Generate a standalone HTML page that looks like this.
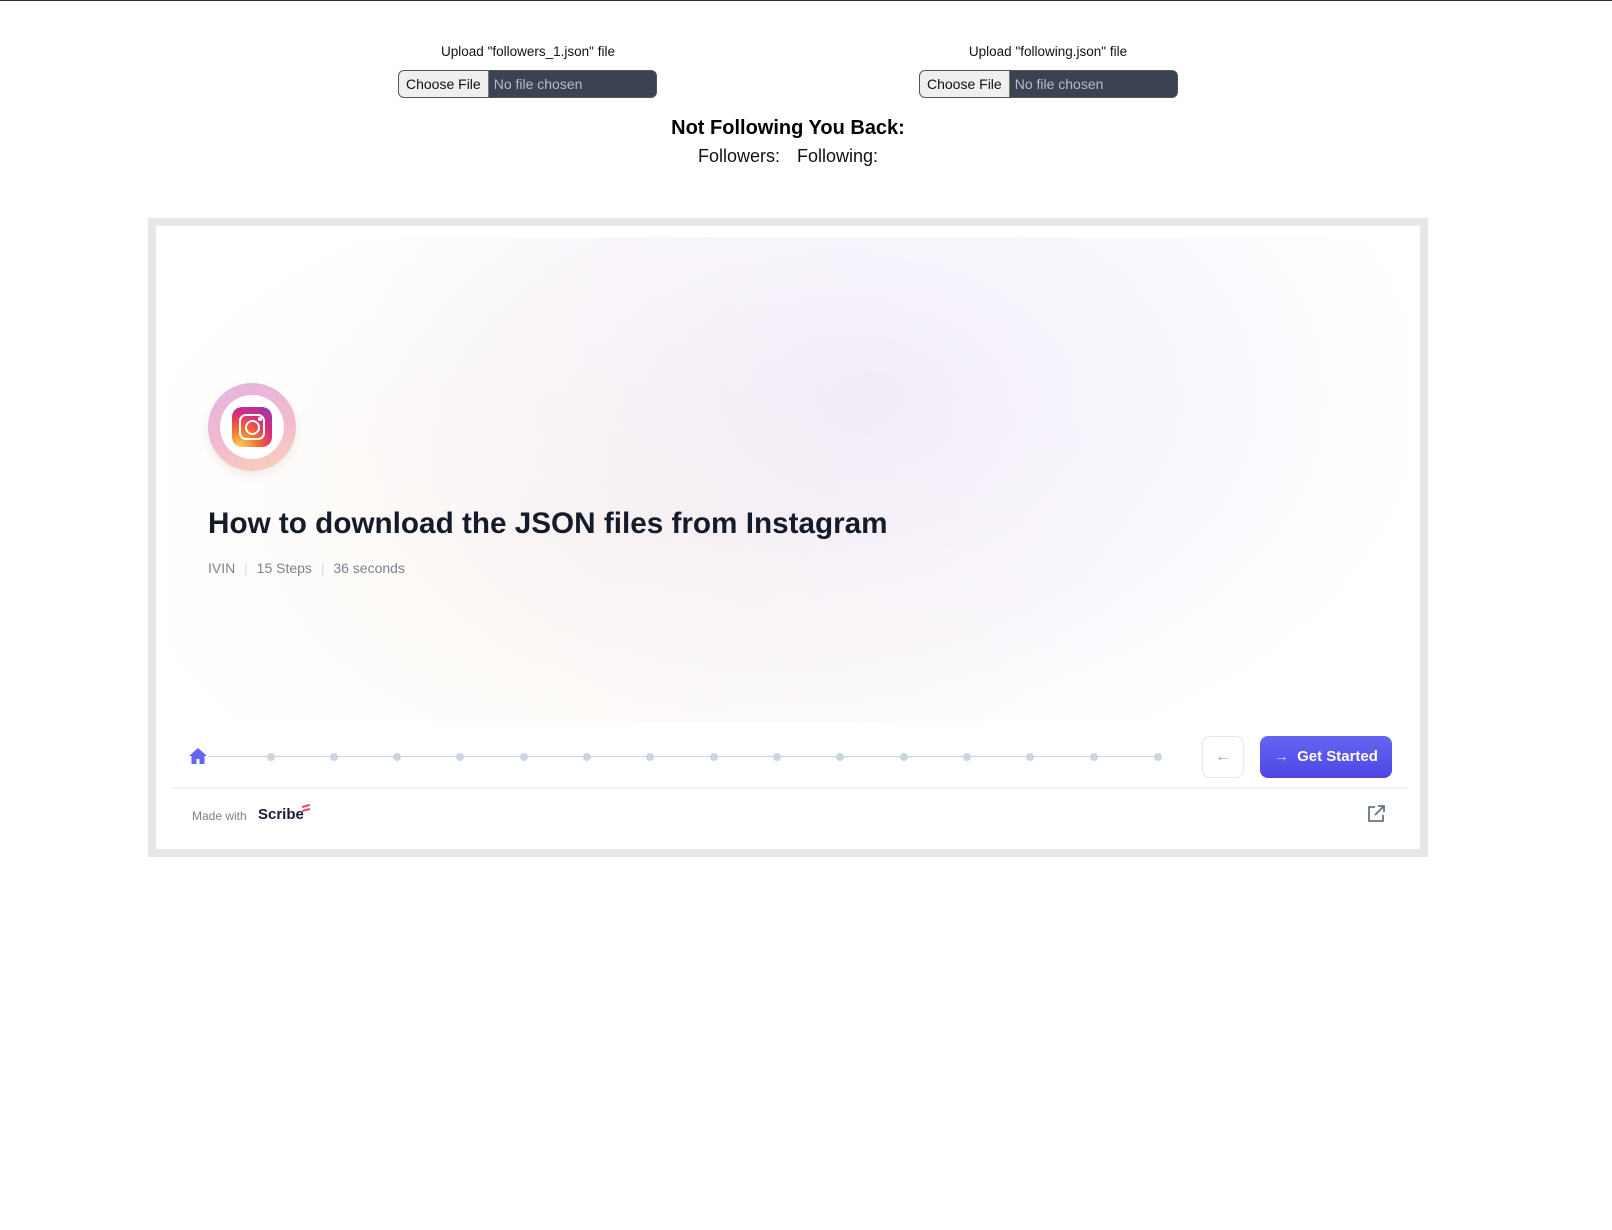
<!DOCTYPE html>
<html><head><meta charset="utf-8"><style>
body{margin:0;width:1612px;height:1230px;background:#fff;font-family:"Liberation Sans",sans-serif;position:relative;overflow:hidden;border-top:1px solid #333;box-sizing:border-box}
.a{position:absolute}
.lbl{font-size:13.5px;color:#111;text-align:center;width:300px}
.inp{height:26px;border:1px solid #555;border-radius:6px;background:#3b4252;overflow:hidden;font-size:14px;display:flex}
.inp .b{background:#efefef;color:#111;padding:0 7px;line-height:26px;border-right:1px solid #777}
.inp .t{color:#b8bcc6;padding-left:5px;line-height:26px}
.frame{left:148px;top:217px;width:1264px;height:623px;border:8px solid #e5e7eb;background:#fff}
.dot{width:8px;height:8px;border-radius:50%;background:#cbd5e1;top:752px}
</style></head><body>
<div class="a lbl" style="left:378px;top:43px">Upload "followers_1.json" file</div>
<div class="a lbl" style="left:898px;top:43px">Upload "following.json" file</div>
<div class="a inp" style="left:398px;top:69px;width:257px"><span class="b">Choose File</span><span class="t">No file chosen</span></div>
<div class="a inp" style="left:919px;top:69px;width:257px"><span class="b">Choose File</span><span class="t">No file chosen</span></div>
<div class="a" style="left:0;width:1576px;top:116px;text-align:center;font-size:20px;font-weight:bold;color:#000">Not Following You Back:</div>
<div class="a" style="left:698px;top:145px;font-size:18px;color:#111">Followers:</div>
<div class="a" style="left:797px;top:145px;font-size:18px;color:#111">Following:</div>
<div class="a frame"></div>
<div class="a" style="left:170px;top:236px;width:1240px;height:485px;background:radial-gradient(ellipse 560px 380px at 700px 160px,rgba(232,222,247,.55),transparent),radial-gradient(ellipse 520px 340px at 450px 280px,rgba(250,240,228,.5),transparent)"></div>
<div class="a" style="left:208px;top:382px;width:88px;height:88px;border-radius:50%;background:linear-gradient(160deg,#e3b5de,#f2b9cf 55%,#fbd3b5);box-shadow:0 4px 10px rgba(0,0,0,.08)"></div>
<div class="a" style="left:220px;top:394px;width:64px;height:64px;border-radius:50%;background:#fff"></div>
<div class="a" style="left:232px;top:406px;width:40px;height:40px;border-radius:10px;background:radial-gradient(circle at 20% 100%,#fdd35c,#f66c2d 35%,#d92d77 65%,#8a3ac1)"></div>
<div class="a" style="left:239px;top:413px;width:22px;height:22px;border:2.5px solid #fff;border-radius:7px"></div>
<div class="a" style="left:244.5px;top:418.5px;width:11px;height:11px;border:2.5px solid #fff;border-radius:50%"></div>
<div class="a" style="left:258px;top:416px;width:3.5px;height:3.5px;background:#fff;border-radius:50%"></div>
<div class="a" style="left:208px;top:506px;font-size:29.7px;font-weight:bold;color:#151b2b">How to download the JSON files from Instagram</div>
<div class="a" style="left:208px;top:559px;font-size:14px;color:#7b8294">IVIN <span style="color:#ddd;margin:0 5px">|</span> 15 Steps <span style="color:#ddd;margin:0 5px">|</span> 36 seconds</div>
<div class="a" style="left:208px;top:755px;width:950px;height:1px;background:#cbd5e1"></div>
<svg class="a" style="left:188px;top:746px" width="20" height="18" viewBox="0 0 20 18"><path d="M10 1L1 9h2.5v8h5v-5h3v5h5V9H19z" fill="#6366f1"/></svg>
<div class="a dot" style="left:267px"></div><div class="a dot" style="left:330px"></div><div class="a dot" style="left:393px"></div><div class="a dot" style="left:456px"></div><div class="a dot" style="left:520px"></div><div class="a dot" style="left:583px"></div><div class="a dot" style="left:646px"></div><div class="a dot" style="left:710px"></div><div class="a dot" style="left:773px"></div><div class="a dot" style="left:836px"></div><div class="a dot" style="left:900px"></div><div class="a dot" style="left:963px"></div><div class="a dot" style="left:1026px"></div><div class="a dot" style="left:1090px"></div><div class="a dot" style="left:1154px"></div>
<div class="a" style="left:1202px;top:735px;width:40px;height:40px;border:1px solid #e2e8f0;border-radius:8px;text-align:center;line-height:40px;color:#94a3b8;font-size:16px">←</div>
<div class="a" style="left:1260px;top:735px;width:132px;height:42px;border-radius:8px;background:linear-gradient(#6366f1,#4f46e5);color:#fff;font-size:15px;font-weight:bold;line-height:42px;text-align:center"><span style="color:#c7c8fa;font-weight:normal;margin-right:8px">→</span>Get Started</div>
<div class="a" style="left:170px;top:786px;width:1238px;height:2px;background:#f3f4f6"></div>
<div class="a" style="left:192px;top:808px;font-size:12px;color:#7b8294">Made with</div>
<div class="a" style="left:258px;top:805px;font-size:15px;font-weight:bold;color:#1e1b3a">Scribe</div>
<div class="a" style="left:302px;top:804px;width:8px;height:2px;background:#f43f5e;transform:rotate(-15deg)"></div>
<div class="a" style="left:302px;top:808px;width:8px;height:2px;background:#f43f5e;transform:rotate(-15deg)"></div>
<svg class="a" style="left:1367px;top:804px" width="18" height="18" viewBox="0 0 18 18" fill="none" stroke="#64748b" stroke-width="1.8"><path d="M8 2H2v14h14v-6M11 1h6v6M17 1L8 10"/></svg>
</body></html>
